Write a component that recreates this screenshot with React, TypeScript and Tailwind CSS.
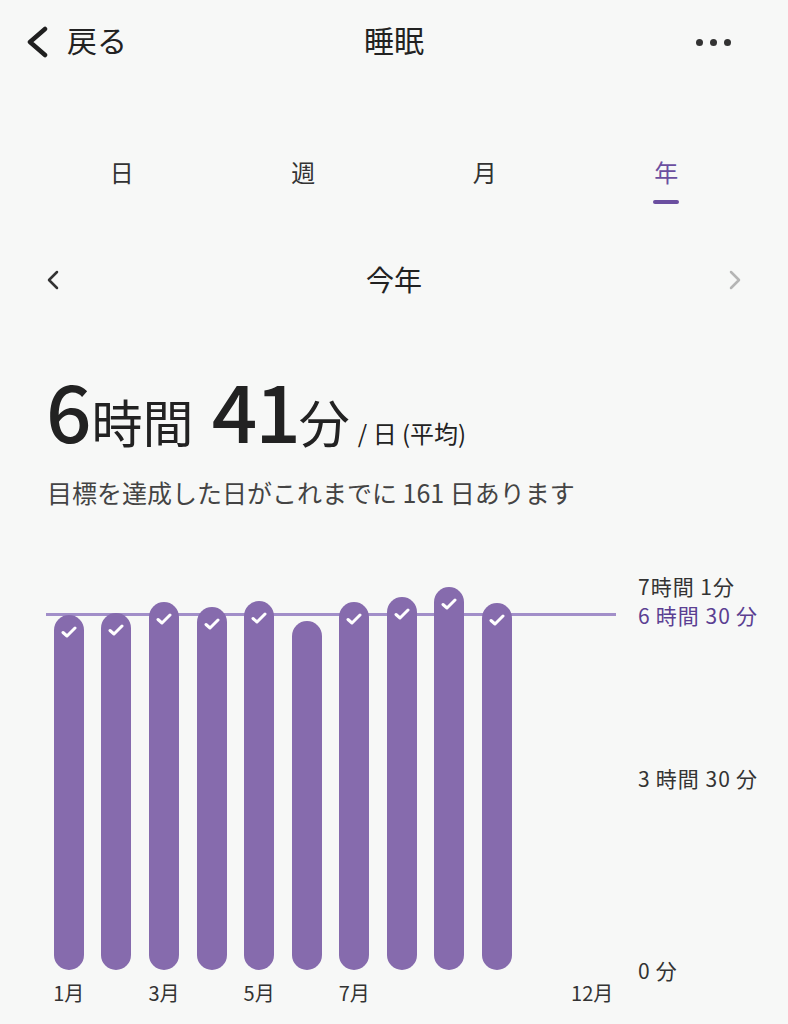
import React from 'react';

const bars = [
  { h: 355, ok: true },
  { h: 357, ok: true },
  { h: 368, ok: true },
  { h: 363, ok: true },
  { h: 369, ok: true },
  { h: 349, ok: false },
  { h: 368, ok: true },
  { h: 373, ok: true },
  { h: 383, ok: true },
  { h: 367, ok: true },
  null,
  null,
];

const months = ['1月', '', '3月', '', '5月', '', '7月', '', '', '', '', '12月'];

// y labels: offset from bar bottom (px)
const yLabels = [
  { text: '7時間 1分', y: 384, purple: false },
  { text: '6\u2009時間 30\u2009分', y: 355, purple: true },
  { text: '3\u2009時間 30\u2009分', y: 192, purple: false },
  { text: '0\u2009分', y: 0, purple: false },
];

const CHART_H = 442;

const Check = () => (
  <svg width="16" height="12" viewBox="0 0 16 12" fill="none">
    <polyline points="2,6.5 6,10 14,2" stroke="white" strokeWidth="3" strokeLinecap="round" strokeLinejoin="round" />
  </svg>
);

export default function App() {
  return (
    <div className="w-[788px] h-[1024px] overflow-hidden bg-[#f7f8f7] text-[#222] font-['Noto_Sans_CJK_JP','Noto_Sans',sans-serif]">
      {/* header */}
      <div className="h-[84px] pb-[6px] grid grid-cols-[1fr_auto_1fr] items-center">
        <div className="flex items-center pl-[25px]">
          <svg width="24" height="32" viewBox="0 0 24 32" fill="none" className="mt-[6px]">
            <polyline points="20,3 5,16 20,29" stroke="#1f1f1f" strokeWidth="4.5" strokeLinecap="round" strokeLinejoin="round" />
          </svg>
          <span className="ml-[18px] text-[30px] leading-none">戻る</span>
        </div>
        <div className="text-[30px] leading-none">睡眠</div>
        <div className="flex justify-end items-center gap-[7px] pr-[57px] mt-[6px]">
          <span className="w-[7px] h-[7px] rounded-full bg-[#333]" />
          <span className="w-[7px] h-[7px] rounded-full bg-[#333]" />
          <span className="w-[7px] h-[7px] rounded-full bg-[#333]" />
        </div>
      </div>

      {/* tabs */}
      <div className="grid grid-cols-4 px-[31px] pt-[74px]">
        {['日', '週', '月', '年'].map((t) => (
          <div key={t} className="flex flex-col items-center">
            <span className={`text-[24px] leading-[28px] ${t === '年' ? 'text-[#6b4fa0]' : 'text-[#333]'}`}>{t}</span>
            <span className={`mt-[14px] w-[26px] h-[4px] rounded-full ${t === '年' ? 'bg-[#6b4fa0]' : 'bg-transparent'}`} />
          </div>
        ))}
      </div>

      {/* period nav */}
      <div className="mt-[56px] h-[40px] flex items-center justify-between px-[46px]">
        <svg width="14" height="22" viewBox="0 0 14 22" fill="none">
          <polyline points="11,3 3,11 11,19" stroke="#333" strokeWidth="2.5" strokeLinecap="round" strokeLinejoin="round" />
        </svg>
        <span className="text-[28px] leading-none -mt-[2px]">今年</span>
        <svg width="14" height="22" viewBox="0 0 14 22" fill="none">
          <polyline points="3,3 11,11 3,19" stroke="#b5b5b5" strokeWidth="2.5" strokeLinecap="round" strokeLinejoin="round" />
        </svg>
      </div>

      {/* average */}
      <div className="mt-[68px] pl-[46px] flex items-baseline">
        <span className="text-[80px] leading-none font-medium">6</span>
        <span className="text-[51px] leading-none">時間</span>
        <span className="ml-[18px] text-[80px] leading-none font-medium tracking-[-2px]">41</span>
        <span className="text-[51px] leading-none">分</span>
        <span className="ml-[8px] text-[24px] leading-none">/ 日 (平均)</span>
      </div>
      <div className="mt-[28px] pl-[47px] text-[25px] leading-[32px] text-[#444]">
        目標を達成した日がこれまでに 161 日あります
      </div>

      {/* chart */}
      <div className="mt-[20px] flex">
        <div className="ml-[45px] w-[571px]">
          <div className="relative" style={{ height: CHART_H }}>
            <div className="absolute left-[1px] right-0 h-[3px] bg-[#a28fc9]" style={{ bottom: 355 - 1 }} />
            <div className="relative h-full flex items-end">
              {bars.map((b, i) => (
                <div key={i} className="w-[47.6px] flex justify-center">
                  {b && (
                    <div className="w-[30px] rounded-full bg-[#866bad] flex justify-center pt-[11px]" style={{ height: b.h }}>
                      {b.ok && <Check />}
                    </div>
                  )}
                </div>
              ))}
            </div>
          </div>
          <div className="mt-[11px] flex">
            {months.map((m, i) => (
              <div key={i} className="w-[47.6px] text-center text-[20px] leading-[24px] text-[#333]">
                {m}
              </div>
            ))}
          </div>
        </div>
        <div className="relative ml-[22px] flex-1" style={{ height: CHART_H }}>
          {yLabels.map((l) => (
            <div
              key={l.text}
              className={`absolute left-0 text-[21px] leading-[28px] whitespace-nowrap tracking-[1px] ${l.purple ? 'text-[#5b3f92]' : 'text-[#333]'}`}
              style={{ top: CHART_H - l.y - 14 }}
            >
              {l.text}
            </div>
          ))}
        </div>
      </div>
    </div>
  );
}
